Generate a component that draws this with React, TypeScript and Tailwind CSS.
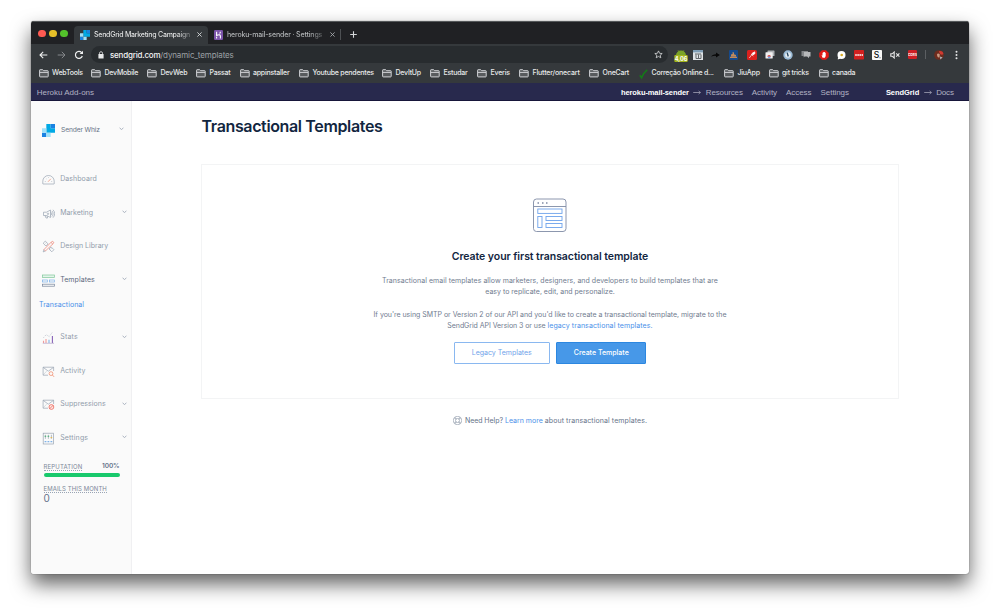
import type { ReactNode } from "react";

function Folder() {
  return (
    <svg width="10" height="9" viewBox="0 0 10 9" fill="none" stroke="#d0d2d5" strokeWidth="1" className="shrink-0">
      <path d="M.6 7.3V1.2Q.6.7 1.1.7H3.7L4.6 1.7H8.7Q9.2 1.7 9.2 2.2V7.3Q9.2 7.9 8.7 7.9H1.1Q.6 7.9.6 7.3Z" fill="#585b5e" />
      <path d="M.8 3.4H9" />
    </svg>
  );
}

function Bookmark({ w, ls, children }: { w: string; ls?: string; children: ReactNode }) {
  return (
    <div className={`flex shrink-0 items-center gap-[3.5px] ${w}`}>
      <Folder />
      <span className={ls ?? "tracking-[-0.22px]"}>{children}</span>
    </div>
  );
}

function Chevron() {
  return (
    <svg width="5" height="4" viewBox="0 0 5 4" fill="none" stroke="#94a0b0" strokeWidth=".8" className="shrink-0">
      <path d="M.6.9L2.5 2.5L4.4.9" />
    </svg>
  );
}

function GridLogo({ size }: { size: string }) {
  return (
    <svg viewBox="0 0 12 12" className={`shrink-0 ${size}`}>
      <path fill="#00a9e5" d="M4 0H8V4H12V8H4Z" />
      <path fill="#1a82e2" d="M0 8H4V12H0ZM8 0H12V4H8Z" />
      <path fill="#9fe0f8" d="M0 4H4V8H0ZM4 8H8V12H4Z" />
    </svg>
  );
}

const line = "#98a3b1";

function Ico({ children }: { children: ReactNode }) {
  return (
    <svg width="13" height="13" viewBox="0 0 13 13" fill="none" stroke={line} strokeWidth=".7" className="shrink-0">
      {children}
    </svg>
  );
}

const icons = {
  dashboard: (
    <Ico>
      <path d="M.8 10.8V8.2A5.7 5.7 0 0 1 12.2 8.2V10.8Q12.2 11 12 11H1Q.8 11 .8 10.8Z" />
      <path d="M6 8.8L8.8 5.8" stroke="#ee8a6a" />
      <path d="M2.8 8.5H3.8M3.9 5.3L4.5 5.9M6.5 4V4.8M9.2 8.5H10.2" strokeWidth=".5" />
    </Ico>
  ),
  marketing: (
    <Ico>
      <path d="M1.5 5.2H4.5L8.5 3V10.5L4.5 8.5H1.5ZM3 8.5L4 11H5.6L5 8.7M8.5 5.2A1.6 1.6 0 0 1 8.5 8.3" />
      <path d="M9.9 3.9A4 4 0 0 1 9.9 9.6M11 2.8A5.5 5.5 0 0 1 11 10.7" />
      <circle cx="6" cy="6.8" r=".7" />
    </Ico>
  ),
  design: (
    <Ico>
      <path d="M1.2 3.2L3.3 1.1L6 3.9L3.9 6ZM7 9L9.1 6.9L11.9 9.7L9.8 11.8Z" />
      <path d="M3.4 3.4L4.4 2.6M8.6 9.2L9.6 8.4" strokeWidth=".5" />
      <path d="M3.4 11L2 9.5L9.5 1.8Q10.4 1 11.3 1.8Q12.1 2.6 11.3 3.5ZM9 2.4L10.8 4.1" stroke="#ee7d6d" />
      <path d="M3.4 11L1.2 11.9L2 9.5" />
    </Ico>
  ),
  templates: (
    <Ico>
      <rect x=".5" y="1" width="12" height="2.6" stroke="#7fc79a" fill="#e4f5ea" />
      <rect x=".5" y="6" width="5" height="2" stroke="#7fb2e8" />
      <rect x="7.5" y="6" width="5" height="2" stroke="#7fb2e8" />
      <rect x=".5" y="10.2" width="12" height="2" stroke="#76839a" />
    </Ico>
  ),
  stats: (
    <Ico>
      <path d="M1.5 12V9.8M4 12V8" stroke="#f09a9a" strokeWidth="1.1" />
      <path d="M7 12V8.8" stroke="#7fb2e8" strokeWidth="1.1" />
      <path d="M10.4 12V5" stroke="#8661b8" strokeWidth="1.1" />
      <path d="M.8 12.3H12" stroke="#b3a5c8" />
      <path d="M1.6 6.6L4.2 3.6L7.2 5.6L10.4 1.2" strokeDasharray=".9 1.4" />
    </Ico>
  ),
  activity: (
    <Ico>
      <path d="M6 10.2H1.1V2.2H11.6V6M1.1 2.3L6.3 6.2L11.6 2.3" />
      <path d="M1.3 9.8L4.6 6.2" strokeWidth=".35" />
      <circle cx="9" cy="8.6" r="1.9" stroke="#ef8360" />
      <path d="M10.4 10L12.1 11.9" stroke="#ef8360" />
    </Ico>
  ),
  suppressions: (
    <Ico>
      <path d="M6 10.2H1.1V2.2H11.6V6M1.1 2.3L6.3 6.2L11.6 2.3" />
      <path d="M1.3 9.8L4.6 6.2" strokeWidth=".35" />
      <circle cx="9.4" cy="9" r="2.4" stroke="#ea5548" fill="#fde9e6" />
      <path d="M7.8 10.6L11 7.4" stroke="#ea5548" />
    </Ico>
  ),
  settings: (
    <Ico>
      <rect x="1.2" y="1.2" width="10.4" height="10.8" />
      <path d="M3.4 2.8V6.8M6.4 2.8V6.8M9.4 2.8V6.8" />
      <path d="M2.6 4.3H4.2M5.6 4.3H7.2" stroke="#3fae6b" strokeWidth="1.1" />
      <path d="M8.6 5.6H10.2" stroke="#e5b84c" strokeWidth="1.1" />
      <path d="M2.6 9.6H4.4M5.5 9.6H7.3M8.5 9.6H10.3" stroke="#7fb2e8" strokeWidth="1.3" />
    </Ico>
  ),
};

function NavRow({ icon, label, ls, chevron, active }: { icon: ReactNode; label: string; ls: string; chevron?: boolean; active?: boolean }) {
  return (
    <div className={`flex h-[33.5px] items-center pr-[4.5px] pl-[11px] ${active ? "text-[#5c687c]" : "text-[#919cab]"}`}>
      <span className="mt-[0.5px]">{icon}</span>
      <span className={`ml-[5.2px] flex-1 pt-[0.5px] ${ls}`}>{label}</span>
      {chevron && <span className="-mt-[1.5px]"><Chevron /></span>}
    </div>
  );
}

function Extensions() {
  return (
    <div className="flex h-[14px] items-center">
      <svg width="14" height="14" viewBox="0 0 14 14" className="mt-[2px] mr-[5px]">
        <path d="M2 6.6A5 5 0 0 1 12 6.6Z" fill="#7ba428" />
        <path d="M4 1.2L5 2.8M10 1.2L9 2.8" stroke="#7ba428" strokeWidth=".7" />
        <rect x=".3" y="6" width="13.4" height="7" rx="1" fill="#a2b41d" />
        <text x="7" y="11.6" textAnchor="middle" fontSize="5.6" fontWeight="700" fill="#fff" fontFamily="Inter, sans-serif">4,06</text>
      </svg>
      <svg width="10" height="10" viewBox="0 0 10 10" className="mr-[8.5px]">
        <rect width="10" height="10" fill="#dfe3e6" />
        <rect width="10" height="2.4" fill="#7e9db5" />
        <path d="M2 4H8M3 4.5V8.5H8V4.5M5.5 4.5V8" stroke="#55595c" fill="none" strokeWidth=".9" />
      </svg>
      <svg width="9" height="8" viewBox="0 0 9 8" className="mr-[9px]">
        <path d="M.2 5.8Q1.2 3.2 5 3.2V1.6L8.9 4L5 6.4V4.9Q2 4.7.2 5.8Z" fill="#080808" />
      </svg>
      <svg width="9" height="10" viewBox="0 0 9 10" className="mr-[8.5px]">
        <rect width="9" height="10" rx="1" fill="#164a8c" />
        <path d="M1 6.8H8V8H1ZM2 6.4V4.4L3.6 4V2L5 2.4V4.2L7 5V6.4Z" fill="#c08a5c" />
      </svg>
      <svg width="10" height="10" viewBox="0 0 10 10" className="mr-[8px]">
        <rect width="10" height="10" rx="1.5" fill="#dc211e" />
        <path d="M2.3 8L5 4.4M4 4L6.2 6.2M5 3.4L7.7 1.8L8 3.5L6 5Z" stroke="#fff" strokeWidth=".7" fill="#fff" />
      </svg>
      <svg width="10" height="9" viewBox="0 0 10 9" className="mr-[8px]">
        <rect x="2.5" y=".5" width="7" height="5.5" rx=".6" fill="#aeb1b4" />
        <rect x=".5" y="2.2" width="7.2" height="6.3" rx=".6" fill="#f1f1f1" />
        <path d="M2.3 6.8A1.8 1.8 0 0 1 5.9 6.8" fill="#db4437" />
        <path d="M3 7.2H5.4" stroke="#4285f4" strokeWidth="1" />
      </svg>
      <svg width="10" height="10" viewBox="0 0 10 10" className="mr-[8px]">
        <circle cx="5" cy="5" r="4.7" fill="#9bbbd6" />
        <circle cx="5" cy="5" r="2.8" fill="#e6edf2" />
        <path d="M4.2 2.6L5.2 6.4" stroke="#26455e" strokeWidth="1.4" fill="none" />
      </svg>
      <svg width="10" height="9" viewBox="0 0 10 9" className="mr-[8px]">
        <path d="M.5 1H7V6H4L2.5 7.5V6H.5Z" fill="#85888b" />
        <path d="M3 2H9.5V6.5H8V8.3L6.2 6.5H3Z" fill="#b7b9bb" />
      </svg>
      <svg width="10" height="10" viewBox="0 0 10 10" className="mr-[8px]">
        <path d="M3 .3H7L9.8 3V7L7 9.7H3L.2 7V3Z" fill="#e01b17" />
        <path d="M3.6 7.8L2.5 5.3L3.5 5.6V2.7H4.3V2.1H5.1V2H5.9V2.7H6.7V6L5.9 7.8Z" fill="#fff" />
      </svg>
      <svg width="9" height="10" viewBox="0 0 9 10" className="mr-[8.5px]">
        <circle cx="4.5" cy="5" r="4" fill="#fff" />
        <circle cx="4.7" cy="5" r="1.3" fill="#d9ac23" />
        <path d="M1 7L.8 9.4L3.5 8.5Z" fill="#fff" />
      </svg>
      <svg width="10" height="10" viewBox="0 0 10 10" className="mr-[8px]">
        <rect width="10" height="9.5" rx=".8" fill="#d2201f" />
        <path d="M1.2 5H9" stroke="#fff" strokeWidth="1.5" strokeDasharray="1.6 .5" />
      </svg>
      <svg width="10" height="10" viewBox="0 0 10 10" className="mr-[8px]">
        <rect width="10" height="10" rx=".8" fill="#f8f8f8" />
        <text x="4.6" y="8" textAnchor="middle" fontSize="8.5" fontWeight="500" fill="#111" fontFamily="Inter, sans-serif">S</text>
        <circle cx="8" cy="7.8" r=".5" fill="#111" />
      </svg>
      <svg width="10" height="8" viewBox="0 0 10 8" fill="none" stroke="#e8e8e8" strokeWidth="1.1" className="mr-[8px]">
        <path d="M.8 2.8H2.2L4.2 1V7L2.2 5.2H.8ZM6.2 2.3L9.4 5.7M9.4 2.3L6.2 5.7" />
      </svg>
      <svg width="9" height="9" viewBox="0 0 9 9" className="mr-[8px]">
        <rect width="9" height="9" rx="1.2" fill="#cf1f24" />
        <text x="4.5" y="5.8" textAnchor="middle" fontSize="3.2" fontWeight="700" fill="#fff" fontFamily="Inter, sans-serif">CORS</text>
      </svg>
      <div className="mr-[7.5px] h-[9px] w-px bg-[#5c5f62]" />
      <svg width="10" height="10" viewBox="0 0 10 10" className="mr-[11px]">
        <circle cx="5" cy="5" r="4.8" fill="#6e2c1e" />
        <path d="M4.8 1.2Q9 .4 9.4 4Q8 5.5 6 4Z" fill="#cf3a31" />
        <path d="M3 4Q4.5 2.6 5.8 4.6L5.5 7.5Q4 8 3.2 6Z" fill="#c99b83" />
        <path d="M6 6.5L8.6 7.4L6.3 9.5Z" fill="#a9bcc2" />
      </svg>
      <svg width="3" height="10" viewBox="0 0 3 10" fill="#e4e5e6">
        <circle cx="1.5" cy="1.7" r="1" />
        <circle cx="1.5" cy="5" r="1" />
        <circle cx="1.5" cy="8.3" r="1" />
      </svg>
    </div>
  );
}

export default function App() {
  return (
    <div className="h-[615px] w-[1000px] overflow-hidden bg-white pt-[21px] pl-[31px] font-['Inter',sans-serif]">
      <div className="flex h-[553px] w-[938px] flex-col overflow-hidden rounded-[3px] bg-white shadow-[0_0_1px_rgba(0,0,0,.7),0_10px_20px_rgba(0,0,0,.62)]">
        {/* Tab strip */}
        <div className="flex h-[23px] shrink-0 items-end border-t border-[#55585a] bg-[#202124]">
          <div className="mb-[7px] ml-[7px] flex gap-[3.5px]">
            <div className="size-[7.5px] rounded-full bg-[#ff5a52]" />
            <div className="size-[7.5px] rounded-full bg-[#e6c029]" />
            <div className="size-[7.5px] rounded-full bg-[#53c22b]" />
          </div>
          <div className="ml-[6.5px] flex h-[18.5px] w-[133.5px] items-center rounded-t-[4px] bg-[#35393c] pl-[6px] text-[7px] font-medium">
            <GridLogo size="size-[10px]" />
            <div className="mt-[1px] ml-[4px] w-[97px] overflow-hidden bg-linear-to-r from-[#eceded] from-85% to-[#66696c] bg-clip-text tracking-[-0.25px] whitespace-nowrap text-transparent">
              SendGrid Marketing Campaign
            </div>
            <svg width="5" height="5" viewBox="0 0 5 5" stroke="#d5d7d9" strokeWidth=".9" className="ml-[6px]">
              <path d="M.4.4L4.6 4.6M4.6.4L.4 4.6" />
            </svg>
          </div>
          <div className="flex h-[18.5px] items-center pl-[6px] text-[7px] font-medium">
            <svg width="9" height="10" viewBox="0 0 9 10" className="shrink-0">
              <rect width="9" height="10" rx="1.2" fill="#7d55ab" />
              <path d="M2.6 1.7V5.4Q6.4 4 6.4 6V8.4M2.6 6.8V8.4M6.4 1.7Q6.4 2.8 5.6 3.5" stroke="#fff" strokeWidth="1.1" fill="none" />
            </svg>
            <div className="mt-[1px] ml-[4.5px] w-[96px] overflow-hidden bg-linear-to-r from-[#b9bcbe] from-85% to-[#55585a] bg-clip-text tracking-[-0.15px] whitespace-nowrap text-transparent">
              heroku-mail-sender · Settings
            </div>
            <svg width="5" height="5" viewBox="0 0 5 5" stroke="#a4a7aa" strokeWidth=".9" className="ml-[6.5px]">
              <path d="M.4.4L4.6 4.6M4.6.4L.4 4.6" />
            </svg>
            <div className="ml-[5.5px] h-[11px] w-px bg-[#4d5053]" />
            <svg width="7" height="7" viewBox="0 0 7 7" stroke="#d5d7d9" strokeWidth="1.1" className="ml-[9px]">
              <path d="M3.5.2V6.8M.2 3.5H6.8" />
            </svg>
          </div>
        </div>

        {/* Toolbar */}
        <div className="flex h-[20px] shrink-0 items-center bg-[#35393c] pt-[1px] pl-[8px]">
          <svg width="9" height="8" viewBox="0 0 9 8" fill="none" stroke="#eeefef" strokeWidth="1.1">
            <path d="M8.3 4H1M4.2.8L1 4L4.2 7.2" />
          </svg>
          <svg width="9" height="8" viewBox="0 0 9 8" fill="none" stroke="#85888b" strokeWidth="1" className="ml-[9px]">
            <path d="M.7 4H8M4.8.8L8 4L4.8 7.2" />
          </svg>
          <svg width="10" height="10" viewBox="0 0 10 10" fill="none" stroke="#eeefef" strokeWidth="1.2" className="ml-[8px]">
            <path d="M8.3 6A3.5 3.5 0 1 1 7.6 2.6L8.4 3.4" />
            <path d="M9 .7V4.1H5.6Z" fill="#eeefef" stroke="none" />
          </svg>
          <div className="ml-[7px] flex h-[17px] w-[577px] items-center rounded-full bg-[#282c2f] pr-[5px] pl-[7px] text-[8px]">
            <svg width="6" height="8" viewBox="0 0 6 8">
              <rect x=".4" y="3" width="5.2" height="4.4" rx=".5" fill="#e8e9ea" />
              <path d="M1.5 3.2V2.2A1.5 1.5 0 0 1 4.5 2.2V3.2" fill="none" stroke="#e8e9ea" strokeWidth=".8" />
            </svg>
            <span className="ml-[6px] font-medium tracking-[-0.21px] text-[#f4f4f5]">sendgrid.com</span>
            <span className="flex-1 tracking-[-0.13px] text-[#9da1a5]">/dynamic_templates</span>
            <svg width="9" height="9" viewBox="0 0 9 9" fill="none" stroke="#d8dadc" strokeWidth=".8">
              <path d="M4.5.9L5.6 3.3L8.2 3.5L6.2 5.2L6.8 7.8L4.5 6.4L2.2 7.8L2.8 5.2L.8 3.5L3.4 3.3Z" />
            </svg>
          </div>
          <div className="ml-[5.5px]">
            <Extensions />
          </div>
        </div>

        {/* Bookmarks */}
        <div className="flex h-[19px] shrink-0 items-center bg-[#35393c] pl-[7.5px] text-[7px] font-medium whitespace-nowrap text-[#e8e9ea]">
          <Bookmark w="w-[52.5px]" ls="tracking-[-0.22px]">WebTools</Bookmark>
          <Bookmark w="w-[56px]">DevMobile</Bookmark>
          <Bookmark w="w-[49px]">DevWeb</Bookmark>
          <Bookmark w="w-[43.5px]">Passat</Bookmark>
          <Bookmark w="w-[59.5px]">appinstaller</Bookmark>
          <Bookmark w="w-[83px]">Youtube pendentes</Bookmark>
          <Bookmark w="w-[48px]">DevItUp</Bookmark>
          <Bookmark w="w-[47px]">Estudar</Bookmark>
          <Bookmark w="w-[42px]">Everis</Bookmark>
          <Bookmark w="w-[70px]" ls="tracking-[-0.16px]">Flutter/onecart</Bookmark>
          <Bookmark w="w-[49.5px]">OneCart</Bookmark>
          <div className="flex w-[85.5px] shrink-0 items-center gap-[4px]">
            <svg width="9" height="10" viewBox="0 0 9 10" fill="none" stroke="#147a18" strokeWidth="1.6">
              <path d="M.8 6.2L2.6 8.8Q4.2 4 8.2.8" />
            </svg>
            <span className="tracking-[-0.24px]">Correção Online d...</span>
          </div>
          <Bookmark w="w-[44.5px]">JiuApp</Bookmark>
          <Bookmark w="w-[50px]">git tricks</Bookmark>
          <Bookmark w="w-[50px]">canada</Bookmark>
        </div>

        {/* Heroku add-on bar */}
        <div className="flex h-[18px] shrink-0 items-center border-b border-[#17163a] bg-[#28294d] pt-[2px] pl-[5.7px] font-['Liberation_Sans',sans-serif] text-[8px] whitespace-nowrap text-[#b1b2c3]">
          <div className="w-[584.3px]">Heroku Add-ons</div>
          <div className="w-[72.5px] text-[7.5px] font-bold tracking-[-0.1px] text-white">heroku-mail-sender</div>
          <Arrow />
          <div className="w-[46px] tracking-[-0.14px]">Resources</div>
          <div className="w-[34.3px]">Activity</div>
          <div className="w-[34.5px] tracking-[-0.06px]">Access</div>
          <div className="w-[65.3px] tracking-[-0.07px]">Settings</div>
          <div className="w-[38px] text-[7.5px] font-bold tracking-[-0.06px] text-white">SendGrid</div>
          <Arrow />
          <div className="tracking-[-0.14px]">Docs</div>
        </div>

        {/* Page */}
        <div className="flex min-h-0 flex-1 text-[7px]">
          <aside className="w-[101px] shrink-0 border-r border-[#f0f0f2] bg-[#fafafa]">
            <div className="flex h-[61.5px] items-start pt-[22px] pl-[11px]">
              <GridLogo size="size-[13px] mt-[1px]" />
              <span className="ml-[6px] w-[57.5px] pt-[1.5px] text-[6.7px] leading-[11px] tracking-[-0.15px] text-[#677386]">Sender Whiz</span>
              <span className="flex pt-[4px]"><Chevron /></span>
            </div>
            <NavRow icon={icons.dashboard} label="Dashboard" ls="tracking-[0.06px]" />
            <NavRow icon={icons.marketing} label="Marketing" ls="tracking-[-0.05px]" chevron />
            <NavRow icon={icons.design} label="Design Library" ls="tracking-[0px]" />
            <NavRow icon={icons.templates} label="Templates" ls="tracking-[0.06px]" chevron active />
            <div className="h-[24px] pt-[2px] pl-[8px] leading-[11px] tracking-[0.05px] text-[#4a90e9]">Transactional</div>
            <NavRow icon={icons.stats} label="Stats" ls="tracking-[0.2px]" chevron />
            <NavRow icon={icons.activity} label="Activity" ls="tracking-[0.05px]" />
            <NavRow icon={icons.suppressions} label="Suppressions" ls="tracking-[0.06px]" chevron />
            <NavRow icon={icons.settings} label="Settings" ls="tracking-[0.15px]" chevron />
            <div className="mt-[7px] ml-[12.5px] w-[76px]">
              <div className="flex justify-between leading-[9px] text-[#66738a]">
                <span className="h-[9px] border-b border-dotted border-[#9aa5b4] text-[6px] tracking-[0.16px] text-[#7c8899]">REPUTATION</span>
                <span className="text-[6.5px] font-semibold tracking-[-0.1px]">100%</span>
              </div>
              <div className="mt-[2.5px] h-[4px] rounded-full bg-[#18c96c]" />
              <div className="mt-[7px] flex">
                <span className="h-[9px] border-b border-dotted border-[#9aa5b4] text-[6px] leading-[9px] tracking-[0.08px] text-[#7c8899]">EMAILS THIS MONTH</span>
              </div>
              <div className="text-[10px] leading-[11px] text-[#66738a]">0</div>
            </div>
          </aside>

          <main className="flex-1 pl-[69px]">
            <h1 className="pt-[14px] pl-[0.5px] text-[16px] leading-[22px] font-semibold tracking-[-0.36px] text-[#12263f]">Transactional Templates</h1>
            <section className="mt-[27px] flex h-[235px] w-[698px] flex-col items-center border border-[#f3f4f5] pt-[32px] text-center text-[#707c8f]">
              <svg width="36" height="36" viewBox="0 0 36 36" fill="none" stroke="#7f8ba5" strokeWidth=".9">
                <rect x="1.5" y="2" width="32.5" height="32.5" rx="3" />
                <path d="M1.5 9.5H34" />
                <path d="M5.5 6H7M10 6H11.5M14 6H15.5" strokeWidth="1.3" />
                <g stroke="#6ea3ec">
                  <rect x="5.8" y="12" width="24.2" height="4.4" />
                  <rect x="5.8" y="19.5" width="4.2" height="11" />
                  <rect x="14" y="19.5" width="16" height="4" />
                  <rect x="14" y="26.5" width="16" height="4" />
                </g>
              </svg>
              <h2 className="mt-[16.5px] text-[10.5px] leading-[14px] font-semibold tracking-[-0.05px] text-[#12263f]">Create your first transactional template</h2>
              <p className="mt-[11.5px] leading-[11px] whitespace-nowrap">
                <span className="tracking-[0.04px]">Transactional email templates allow marketers, designers, and developers to build templates that are</span>
                <br />
                easy to replicate, edit, and personalize.
              </p>
              <p className="mt-[11.5px] leading-[11px] whitespace-nowrap">
                <span className="tracking-[-0.025px]">If you're using SMTP or Version 2 of our API and you'd like to create a transactional template, migrate to the</span>
                <br />
                <span className="tracking-[-0.06px]">SendGrid API Version 3 or use </span>
                <span className="tracking-[0.08px] text-[#4a90e9]">legacy transactional templates.</span>
              </p>
              <div className="mt-[11px] flex gap-[6.5px]">
                <button className="h-[22.5px] w-[96px] rounded-[1px] border border-[#8ab8f0] text-[#6fa3ea]">Legacy Templates</button>
                <button className="h-[22.5px] w-[90px] rounded-[1px] border border-[#2c87e0] bg-[#4798e8] font-medium text-white">Create Template</button>
              </div>
            </section>
            <div className="flex w-[698px] items-center justify-center pt-[16px] leading-[11px] text-[#66738a]">
              <svg width="9" height="9" viewBox="0 0 9 9" fill="none" stroke="#8894a5" strokeWidth=".6" className="mr-[3px]">
                <circle cx="4.5" cy="4.5" r="4.1" />
                <circle cx="4.5" cy="4.5" r="2" />
                <path d="M1.2 2.2L3.3 3.2M2.2 1.2L3.2 3M7.8 2.2L5.7 3.2M6.8 1.2L5.8 3M1.2 6.8L3.3 5.8M2.2 7.8L3.2 6M7.8 6.8L5.7 5.8M6.8 7.8L5.8 6" />
              </svg>
              <span className="tracking-[-0.05px]">Need Help?</span>
              <span className="ml-[2px] text-[#4a90e9]">Learn more</span>
              <span className="ml-[2px] tracking-[0.085px]">about transactional templates.</span>
            </div>
          </main>
        </div>
      </div>
    </div>
  );
}

function Arrow() {
  return (
    <svg width="8" height="5" viewBox="0 0 8 5" fill="none" stroke="#b1b2c3" strokeWidth=".7" className="mr-[4.3px] shrink-0">
      <path d="M.2 2.5H7.4M5.6.9L7.4 2.5L5.6 4.1" />
    </svg>
  );
}
